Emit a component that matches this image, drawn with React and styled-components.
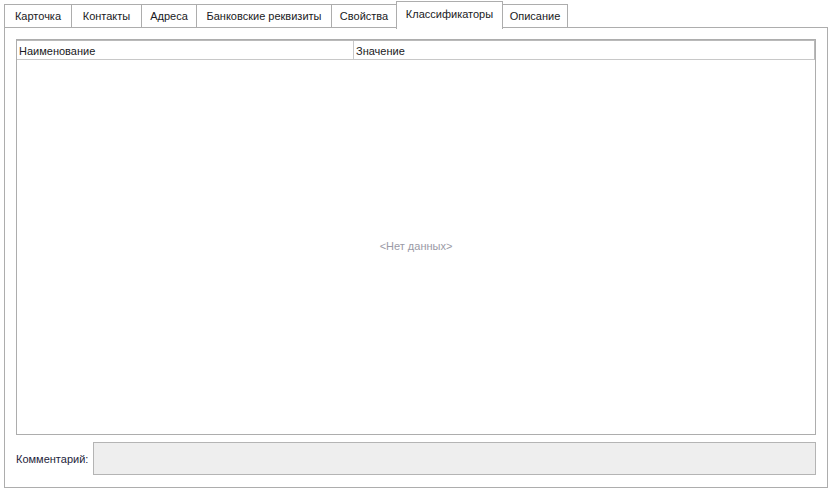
import React from 'react';
import styled, { createGlobalStyle } from 'styled-components';

const GlobalStyle = createGlobalStyle`
  html, body {
    margin: 0;
    padding: 0;
    background: #ffffff;
  }
  body {
    font-family: "Liberation Sans", Arial, sans-serif;
    font-size: 11px;
    color: #1e1e2e;
  }
`;

const Page = styled.div`
  width: 834px;
  height: 490px;
  box-sizing: border-box;
  padding: 1px 6px 0 4px;
  display: flex;
  flex-direction: column;
`;

const TabStrip = styled.div`
  display: flex;
  align-items: flex-end;
  height: 26px;
  position: relative;
  z-index: 1;
`;

const Tab = styled.div`
  box-sizing: border-box;
  width: ${p => p.$w}px;
  height: ${p => (p.$active ? '28px' : '23px')};
  margin-bottom: ${p => (p.$active ? '-2px' : '0')};
  padding-bottom: ${p => (p.$active ? '4px' : '0')};
  margin-right: ${p => (p.$active ? '-1px' : '0')};
  display: flex;
  align-items: center;
  justify-content: center;
  border: 1px solid #adadad;
  border-bottom: none;
  border-right: ${p => (p.$last || p.$active ? '1px solid #adadad' : 'none')};
  background: #ffffff;
  white-space: nowrap;
  color: #1a1a24;
  position: relative;
`;

const Panel = styled.div`
  box-sizing: border-box;
  height: 461px;
  border: 1px solid #adadad;
  padding: 11px 11px 12px 11px;
  display: flex;
  flex-direction: column;
  gap: 7px;
`;

const Grid = styled.div`
  flex: 1;
  border: 1px solid #adadad;
  display: flex;
  flex-direction: column;
`;

const HeaderRow = styled.div`
  display: grid;
  grid-template-columns: 336px 1fr;
  height: 18px;
  border-top: 1px solid #b9b9b9;
  border-right: 1px solid #b9b9b9;
  border-bottom: 1px solid #c8c8c8;
`;

const HeaderCell = styled.div`
  display: flex;
  align-items: flex-end;
  padding: 0 0 2px 2px;
  border-left: ${p => (p.$first ? 'none' : '1px solid #c8c8c8')};
  color: #1a1a24;
`;

const GridBody = styled.div`
  flex: 1;
  display: flex;
  align-items: center;
  justify-content: center;
  padding-bottom: 2px;
`;

const EmptyText = styled.span`
  color: #9a9aa6;
`;

const CommentRow = styled.div`
  display: flex;
  align-items: center;
  gap: 6px;
`;

const Label = styled.span`
  width: 71px;
  color: #1e1e3c;
`;

const CommentBox = styled.div`
  flex: 1;
  height: 33px;
  box-sizing: border-box;
  border: 1px solid #b4b4b4;
  background: #eeeeee;
`;

const tabs = [
  { title: 'Карточка', w: 67 },
  { title: 'Контакты', w: 70 },
  { title: 'Адреса', w: 55 },
  { title: 'Банковские реквизиты', w: 135 },
  { title: 'Свойства', w: 65 },
  { title: 'Классификаторы', w: 107 },
  { title: 'Описание', w: 66 },
];

export default function App() {
  const active = 5;
  return (
    <>
      <GlobalStyle />
      <Page>
        <TabStrip>
          {tabs.map((t, i) => (
            <Tab
              key={t.title}
              $w={t.w}
              $active={i === active}
              $last={i === tabs.length - 1}
            >
              {t.title}
            </Tab>
          ))}
        </TabStrip>
        <Panel>
          <Grid>
            <HeaderRow>
              <HeaderCell $first>Наименование</HeaderCell>
              <HeaderCell>Значение</HeaderCell>
            </HeaderRow>
            <GridBody>
              <EmptyText>&lt;Нет данных&gt;</EmptyText>
            </GridBody>
          </Grid>
          <CommentRow>
            <Label>Комментарий:</Label>
            <CommentBox />
          </CommentRow>
        </Panel>
      </Page>
    </>
  );
}
